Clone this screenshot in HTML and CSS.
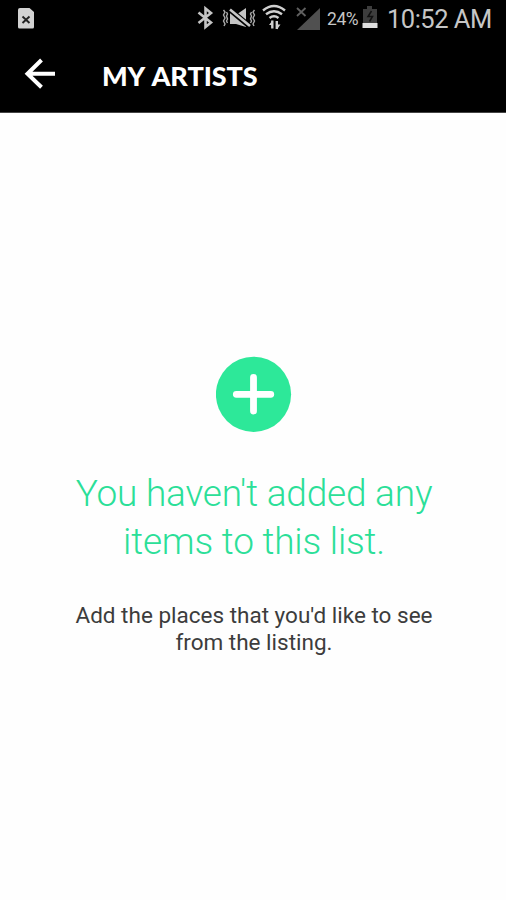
FILE: index.html
```html
<!DOCTYPE html>
<html lang="en">
<head>
<meta charset="utf-8">
<title>My Artists</title>
<link rel="stylesheet" href="styles.css">
</head>
<body>
<div class="statusbar">
  <svg class="sim" width="18" height="22" viewBox="0 0 18 22"><path d="M2 0h9.500l4.500 4v15q0 1.500-1.500 1.500h-13Q0 20.500 0 19V2Q0 0 2 0z" fill="#d2d2d2"/><path d="M4.500 8.500l7 6.500M11.500 8.500L4.500 15" stroke="#222" stroke-width="1.900"/></svg>
  <svg class="status-icons" width="132" height="36" viewBox="190 0 132 36" fill="none">
    <path d="M198.500 12.500l12.500 10-5.500 4.500V8.500L211 13l-12.500 10" stroke="#c4c4c4" stroke-width="2.600"/>
    <path d="M223.500 10l1.500 2-1.500 3 1.500 3-1.500 3 1.500 3-1 2M226.500 12l1 2-1 2 1 3-1 2 1 2M251.500 12l-1 2 1 2-1 3 1 2-1 2M254.500 10l-1.500 2 1.500 3-1.500 3 1.500 3-1.500 3 1 2" stroke="#aaa" stroke-width="1.400"/>
    <path d="M230 11v13h6l10 3V8l-8 5.500z" fill="#c4c4c4"/>
    <path d="M228.500 8.500l21.500 18" stroke="#000" stroke-width="5.500"/>
    <path d="M230 9.500l20 16.500" stroke="#c8c8c8" stroke-width="2.600"/>
    <g stroke="#d0d0d0" stroke-width="2.400">
      <path d="M263 10.500q11-9 22 0M266 14.300q8-6 16 0M269.500 18q4.500-3.500 9 0"/>
      <path d="M272.300 20.500v8M276.800 21v8" stroke-width="2.400"/>
    </g>
    <path d="M269 25l3.500-4.500V25zM280.500 24.500l-3.500 5v-5z" fill="#d0d0d0"/>
    <path d="M320 8v22h-23z" fill="#505050"/>
    <path d="M297 8l8.500 8M305.500 8l-8.500 8" stroke="#606060" stroke-width="1.800"/>
  </svg>
  <span class="percent">24%</span>
  <svg class="battery" width="16" height="24" viewBox="0 0 16 24"><path d="M5 0h5v3h5v14H1V3h4z" fill="#3d3d3d"/><path d="M9.500 5L6 10.500h4.500l-3 5" fill="none" stroke="#111" stroke-width="1.500"/><path d="M.500 17h15v5h-15z" fill="#dedede"/></svg>
  <span class="clock">10:52 AM</span>
</div>
<header class="appbar">
  <svg class="back" width="32" height="32" viewBox="0 0 32 32"><path d="M17.500 2L3.500 15.700l14 13.500M3.500 15.700H31" fill="none" stroke="#fff" stroke-width="4"/></svg>
  <h1 class="title">MY ARTISTS</h1>
</header>
<main class="empty">
  <svg class="add" width="76" height="76" viewBox="0 0 76 76"><circle cx="37.500" cy="38.300" r="37.600" fill="#2de899"/><path d="M37.500 21.500V55M20.300 38.300h34.500" stroke="#fff" stroke-width="6.800" stroke-linecap="round"/></svg>
  <h2 class="heading">You haven't added any<br>items to this list.</h2>
  <p class="hint">Add the places that you'd like to see<br>from the listing.</p>
</main>
</body>
</html>
```

FILE: styles.css
```css
* { box-sizing: border-box; }
body {
  margin: 0;
  height: 900px;
  background: #fefefe;
  font-family: Roboto, "Liberation Sans", sans-serif;
  overflow: hidden;
}
svg { display: block; flex: none; }
.statusbar {
  display: flex;
  height: 38px;
  background: #000;
  color: #c6c6c6;
  white-space: nowrap;
}
.sim { margin: 8px 0 0 18px; }
.status-icons { margin-left: 154px; }
.percent {
  width: 35px;
  margin: 8px 0 0 5px;
  font-size: 17.5px;
  line-height: 22px;
  letter-spacing: -0.4px;
}
.battery { margin-top: 6px; }
.clock {
  margin: 4px 0 0 9px;
  font-size: 25.5px;
  line-height: 30px;
  letter-spacing: -0.5px;
}
.appbar {
  display: flex;
  height: 75px;
  background: #000;
  border-bottom: 1px solid #444;
}
.back { margin: 20px 0 0 24px; }
.title {
  margin: 22px 0 0 46px;
  color: #fff;
  font: 900 27px/32px Lato, sans-serif;
  font-kerning: none;
  letter-spacing: -0.15px;
  white-space: nowrap;
}
.empty {
  display: flex;
  flex-direction: column;
  align-items: center;
  padding: 243px 0 0 2px;
  text-align: center;
  white-space: nowrap;
}
.heading {
  margin: 38px 0 0;
  color: #2bdf98;
  font-size: 37px;
  font-weight: 300;
  line-height: 48px;
  letter-spacing: -0.2px;
}
.hint {
  margin: 36px 0 0;
  color: #3c3c3c;
  font-size: 22.5px;
  line-height: 27px;
}
```
